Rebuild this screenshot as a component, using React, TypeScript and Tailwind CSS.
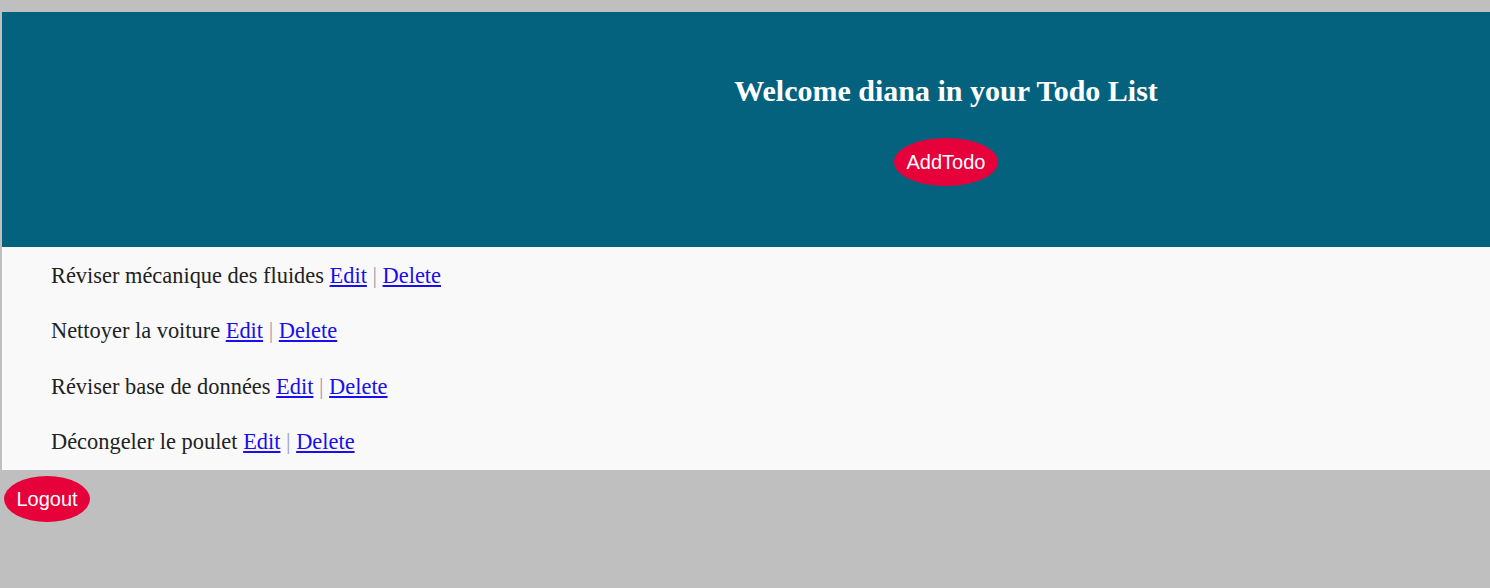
import React from 'react';

const todos = [
  'Réviser mécanique des fluides',
  'Nettoyer la voiture',
  'Réviser base de données',
  'Décongeler le poulet',
];

const App: React.FC = () => {
  return (
    <div className="min-h-[588px] bg-[#bfbfbf] pt-[12px] pl-[2px] font-['Liberation_Serif',serif]">
      <header className="h-[235px] bg-[#05627f] pl-[400px] flex flex-col items-center">
        <h1 className="mt-[61px] text-[30px] leading-[36px] font-bold text-white">
          Welcome diana in your Todo List
        </h1>
        <button className="mt-[29px] w-[104px] h-[48px] rounded-[50%] bg-[#e6013b] text-white text-[20px] font-['Liberation_Sans',sans-serif]">
          AddTodo
        </button>
      </header>

      <ul className="bg-[#f9f9f9] pl-[49px] pt-[1px]">
        {todos.map(todo => (
          <li key={todo} className="h-[55.5px] flex items-center text-[22.4px] text-[#222]">
            <span>
              {todo}{' '}
              <a href="#" className="text-[#1a0dee] underline">Edit</a>
              <span className="text-gray-400"> | </span>
              <a href="#" className="text-[#1a0dee] underline">Delete</a>
            </span>
          </li>
        ))}
      </ul>

      <div className="pt-[6px] pl-[2px]">
        <button className="w-[86px] h-[46px] rounded-[50%] bg-[#e6013b] text-white text-[20px] font-['Liberation_Sans',sans-serif]">
          Logout
        </button>
      </div>
    </div>
  );
};

export default App;
